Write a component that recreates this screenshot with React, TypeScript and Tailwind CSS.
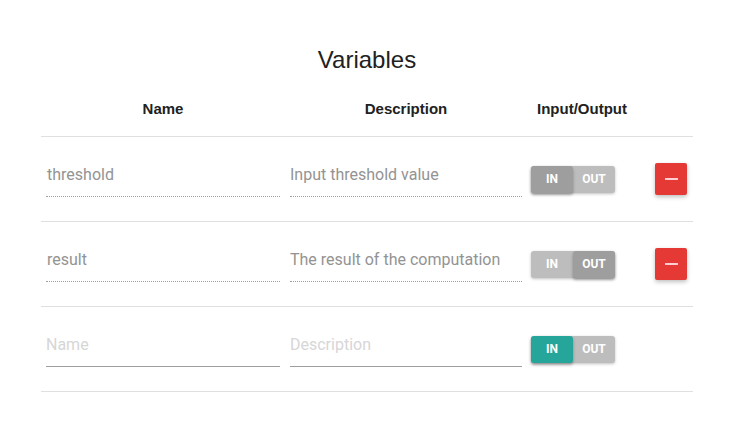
import React from "react";

type Row = { name: string; description: string; io: "in" | "out" };

const ROWS: Row[] = [
  { name: "threshold", description: "Input threshold value", io: "in" },
  { name: "result", description: "The result of the computation", io: "out" },
];

function Toggle({ value, fresh }: { value: "in" | "out"; fresh?: boolean }) {
  const on = fresh ? "bg-[#26a69a]" : "bg-[#9e9e9e]";
  return (
    <div className="flex h-[27px] w-[84px] rounded-[3px] bg-[#bdbdbd] font-['Roboto',sans-serif] text-[12px] font-bold text-white shadow-[0_1px_3px_rgba(0,0,0,0.25)]">
      <div
        className={`flex w-[42px] items-center justify-center rounded-[3px] ${
          value === "in" ? `${on} shadow-[0_2px_3px_rgba(0,0,0,0.3)]` : ""
        }`}
      >
        IN
      </div>
      <div
        className={`flex w-[42px] items-center justify-center rounded-[3px] ${
          value === "out" ? `${on} shadow-[0_2px_3px_rgba(0,0,0,0.3)]` : ""
        }`}
      >
        OUT
      </div>
    </div>
  );
}

function RemoveButton() {
  return (
    <button className="flex h-8 w-8 items-center justify-center rounded-[2px] bg-[#e53935] shadow-[0_2px_4px_rgba(0,0,0,0.25)]">
      <span className="block h-[2px] w-[13px] bg-[#ffcdd2]" />
    </button>
  );
}

export default function App() {
  return (
    <div className="min-h-[442px] bg-white font-['Liberation_Sans',Helvetica,Arial,sans-serif] text-[#212121]">
      <div className="mx-auto w-[652px] pt-[45px]">
        <h1 className="text-center text-[24px] leading-[30px] font-normal">Variables</h1>

        <div className="mt-[26px] grid grid-cols-[244px_242px_110px_56px] border-b border-[#e0e0e0] pb-[19px] text-center text-[15px] font-bold leading-[16px]">
          <div>Name</div>
          <div>Description</div>
          <div>Input/Output</div>
          <div />
        </div>

        {ROWS.map((row) => (
          <div
            key={row.name}
            className="grid h-[85px] grid-cols-[244px_242px_110px_56px] items-center border-b border-[#e0e0e0] font-['Roboto',sans-serif]"
          >
            <div className="px-[5px]">
              <div className="h-9 border-b border-dotted border-[#9e9e9e] pt-[2px] pl-[1px] text-[16px] text-[#939393]">
                {row.name}
              </div>
            </div>
            <div className="px-[5px]">
              <div className="h-9 border-b border-dotted border-[#9e9e9e] pt-[2px] text-[16px] text-[#939393]">
                {row.description}
              </div>
            </div>
            <div className="pl-[4px]">
              <Toggle value={row.io} />
            </div>
            <div className="pl-[18px]">
              <RemoveButton />
            </div>
          </div>
        ))}

        <div className="grid h-[85px] grid-cols-[244px_242px_110px_56px] items-center border-b border-[#e0e0e0] font-['Roboto',sans-serif]">
          <div className="px-[5px]">
            <input
              placeholder="Name"
              className="h-9 w-full border-b border-[#9e9e9e] pb-[8px] text-[16px] outline-none placeholder:text-[#d6d6d6]"
            />
          </div>
          <div className="px-[5px]">
            <input
              placeholder="Description"
              className="h-9 w-full border-b border-[#9e9e9e] pb-[8px] text-[16px] outline-none placeholder:text-[#d6d6d6]"
            />
          </div>
          <div className="pl-[4px]">
            <Toggle value="in" fresh />
          </div>
          <div />
        </div>
      </div>
    </div>
  );
}
